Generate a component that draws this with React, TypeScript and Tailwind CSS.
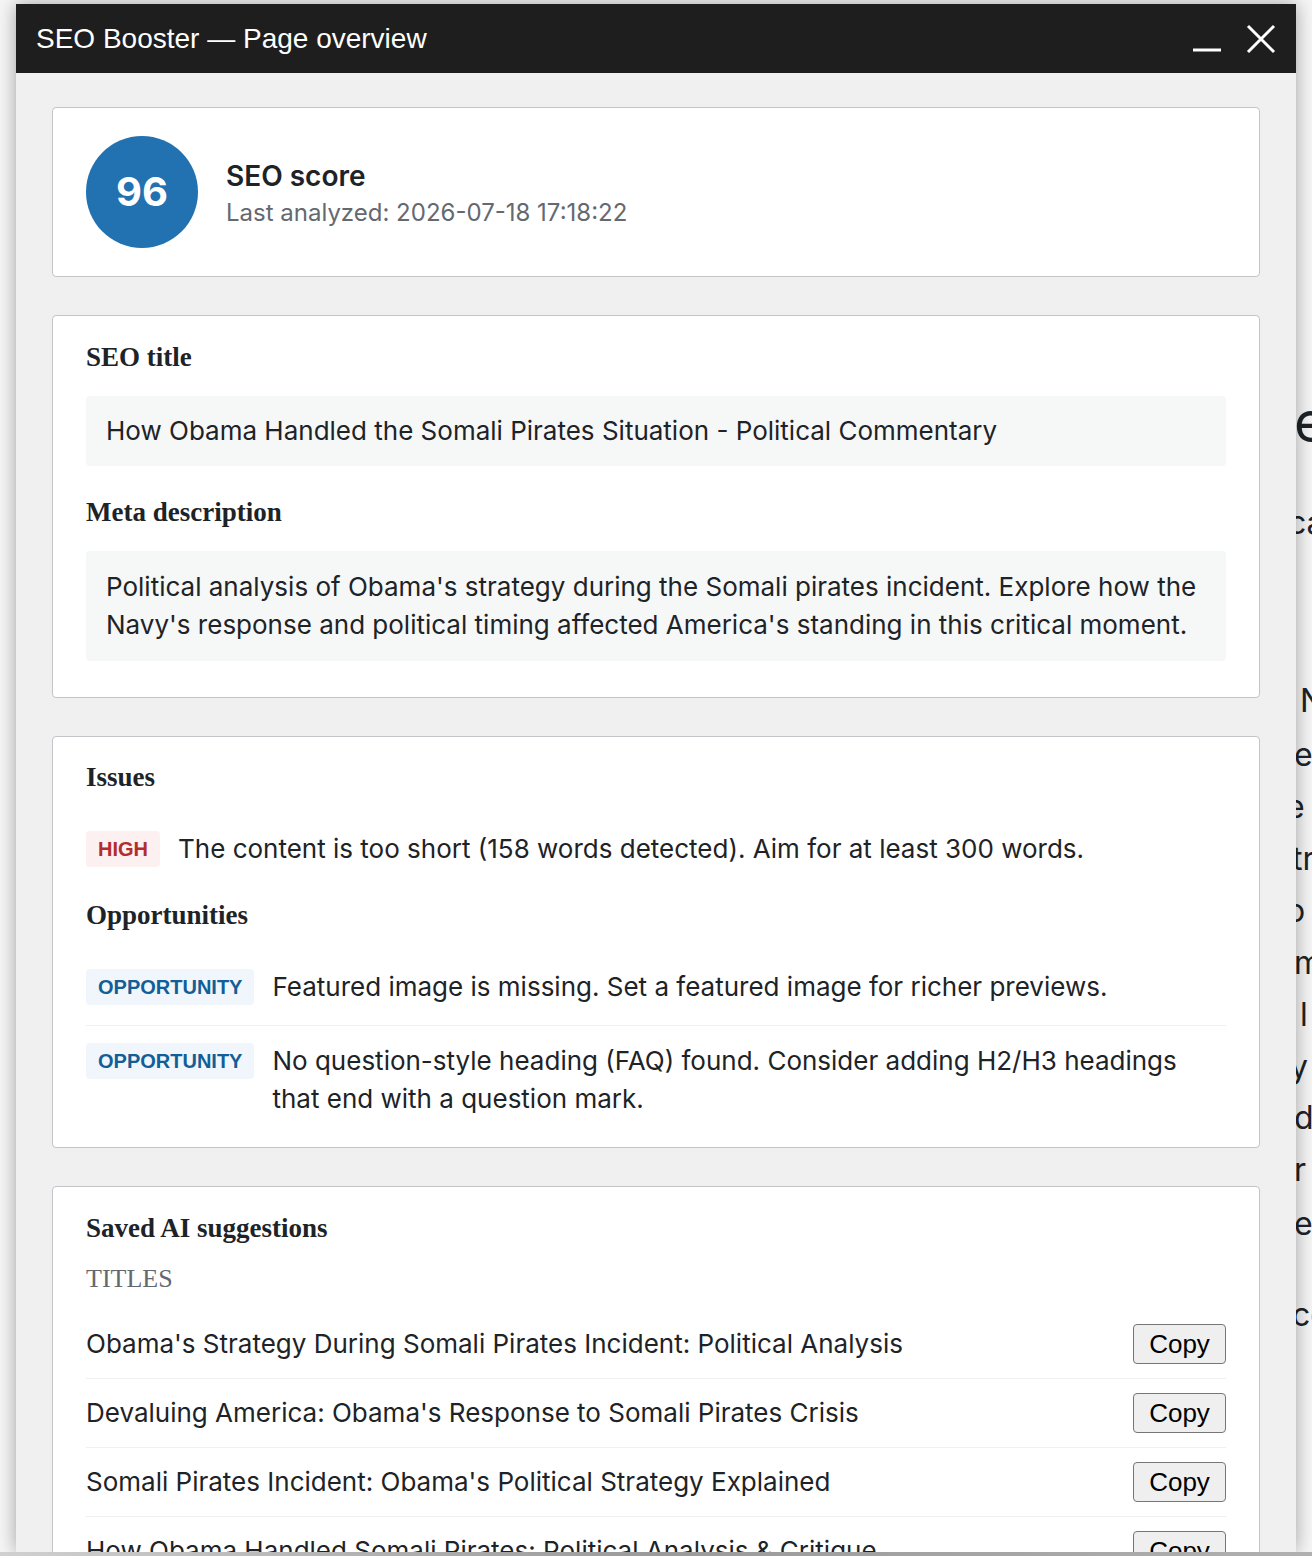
import React from "react";

const serif = "font-['Liberation_Serif','Times_New_Roman',serif]";
const sans = "font-['Inter','Noto_Sans',sans-serif]";

const behind = [
  { top: 394, left: 1294, text: "e", cls: "text-[56px]" },
  { top: 507, left: 1288, text: "ca", cls: "text-[32px]" },
  { top: 685, left: 1300, text: "N", cls: "text-[32px]" },
  { top: 739, left: 1294, text: "e", cls: "text-[32px]" },
  { top: 791, left: 1286, text: "e c", cls: "text-[32px]" },
  { top: 843, left: 1292, text: "tr", cls: "text-[32px]" },
  { top: 895, left: 1286, text: "o", cls: "text-[32px]" },
  { top: 947, left: 1294, text: "m", cls: "text-[32px]" },
  { top: 999, left: 1300, text: "l", cls: "text-[32px]" },
  { top: 1051, left: 1290, text: "y", cls: "text-[32px]" },
  { top: 1102, left: 1294, text: "d", cls: "text-[32px]" },
  { top: 1154, left: 1294, text: "r", cls: "text-[32px]" },
  { top: 1208, left: 1294, text: "e", cls: "text-[32px]" },
  { top: 1299, left: 1292, text: "co", cls: "text-[32px]" },
];

const titles = [
  "Obama's Strategy During Somali Pirates Incident: Political Analysis",
  "Devaluing America: Obama's Response to Somali Pirates Crisis",
  "Somali Pirates Incident: Obama's Political Strategy Explained",
  "How Obama Handled Somali Pirates: Political Analysis & Critique",
];

function Heading({ children, className = "" }: { children: React.ReactNode; className?: string }) {
  return (
    <h3 className={`${serif} text-[27px] leading-[34px] font-bold text-[#1d2327] ${className}`}>
      {children}
    </h3>
  );
}

function Badge({ kind }: { kind: "high" | "opp" }) {
  return kind === "high" ? (
    <span className="shrink-0 h-[36px] px-[12px] rounded-[4px] bg-[#fcf0f1] text-[#b32d2e] font-['Liberation_Sans',Arial,sans-serif] font-bold text-[20px] leading-[36px]">
      HIGH
    </span>
  ) : (
    <span className="shrink-0 h-[36px] px-[12px] rounded-[4px] bg-[#f0f6fc] text-[#135e96] font-['Liberation_Sans',Arial,sans-serif] font-bold text-[20px] leading-[36px]">
      OPPORTUNITY
    </span>
  );
}

export default function App() {
  return (
    <div className="relative w-[1312px] h-[1556px] overflow-hidden bg-[#f6f6f6]">
      {/* page behind the modal */}
      {behind.map((b) => (
        <span
          key={b.top}
          className={`absolute ${sans} text-[#1d2327] leading-none whitespace-nowrap ${b.cls}`}
          style={{ top: b.top, left: b.left }}
        >
          {b.text}
        </span>
      ))}

      <div className="absolute left-[16px] top-[4px] w-[1280px] h-[1548px] flex flex-col shadow-[0_0_18px_rgba(0,0,0,0.35)]">
        <div className="h-[69px] shrink-0 bg-[#1e1e1e] flex items-center justify-between pl-[20px] pr-[20px]">
          <span className="font-['Liberation_Sans',Arial,sans-serif] text-white text-[28px]">
            SEO Booster — Page overview
          </span>
          <div className="flex items-center gap-[24px]">
            <svg width="30" height="30" viewBox="0 0 30 30" className="mt-[2px]">
              <path d="M1 25h28" stroke="#fff" strokeWidth="3" />
            </svg>
            <svg width="30" height="30" viewBox="0 0 30 30">
              <path d="M2 2l26 26M28 2L2 28" stroke="#fff" strokeWidth="3" />
            </svg>
          </div>
        </div>

        <div className={`flex-1 overflow-hidden bg-[#f0f0f0] px-[36px] pt-[34px] flex flex-col gap-[38px] ${sans} text-[#1d2327]`}>
          {/* score */}
          <div className="shrink-0 bg-white border border-[#c3c4c7] rounded-[4px] px-[33px] py-[28px] flex items-center gap-[28px]">
            <div className="w-[112px] h-[112px] rounded-full bg-[#2271b1] flex items-center justify-center text-white text-[40px] font-bold">
              96
            </div>
            <div className="flex flex-col gap-[2px] pt-[4px]">
              <span className="text-[28px] font-semibold leading-[36px] text-[#1d2327]">SEO score</span>
              <span className="text-[24px] leading-[34px] text-[#646970]">Last analyzed: 2026-07-18 17:18:22</span>
            </div>
          </div>

          {/* title / meta */}
          <div className="shrink-0 bg-white border border-[#c3c4c7] rounded-[4px] px-[33px] pt-[24px] pb-[36px]">
            <Heading>SEO title</Heading>
            <div className="mt-[22px] bg-[#f6f7f7] rounded-[4px] px-[20px] py-[16px] text-[26px] leading-[38px]">
              How Obama Handled the Somali Pirates Situation - Political Commentary
            </div>
            <Heading className="mt-[29px]">Meta description</Heading>
            <div className="mt-[22px] bg-[#f6f7f7] rounded-[4px] px-[20px] py-[17px] text-[26px] leading-[38px]">
              Political analysis of Obama's strategy during the Somali pirates incident. Explore how the Navy's
              response and political timing affected America's standing in this critical moment.
            </div>
          </div>

          {/* issues */}
          <div className="shrink-0 bg-white border border-[#c3c4c7] rounded-[4px] px-[33px] pt-[23px] pb-[29px]">
            <Heading>Issues</Heading>
            <div className="mt-[37px] flex items-start gap-[18px]">
              <Badge kind="high" />
              <span className="text-[26px] leading-[38px] -mt-[1px]">
                The content is too short (158 words detected). Aim for at least 300 words.
              </span>
            </div>
            <Heading className="mt-[30px]">Opportunities</Heading>
            <div className="mt-[37px] flex items-start gap-[18px] pb-[19px] border-b border-[#f0f0f1]">
              <Badge kind="opp" />
              <span className="text-[26px] leading-[38px] -mt-[1px]">
                Featured image is missing. Set a featured image for richer previews.
              </span>
            </div>
            <div className="pt-[17px] flex items-start gap-[18px]">
              <Badge kind="opp" />
              <span className="text-[26px] leading-[38px] -mt-[1px]">
                No question-style heading (FAQ) found. Consider adding H2/H3 headings that end with a question
                mark.
              </span>
            </div>
          </div>

          {/* AI suggestions */}
          <div className="shrink-0 bg-white border border-[#c3c4c7] rounded-[4px] px-[33px] pt-[24px] pb-[30px]">
            <Heading>Saved AI suggestions</Heading>
            <div className={`${serif} mt-[17px] text-[26px] leading-[34px] text-[#646970] uppercase`}>Titles</div>
            <div className="mt-[14px]">
              {titles.map((t) => (
                <div key={t} className="flex items-center justify-between py-[14px] border-b border-[#f0f0f1]">
                  <span className="text-[26px] leading-[38px]">{t}</span>
                  <button className="h-[40px] w-[93px] rounded-[4px] border border-[#767676] bg-[#efefef] font-['Liberation_Sans',Arial,sans-serif] text-[26px] text-black leading-none">
                    Copy
                  </button>
                </div>
              ))}
            </div>
          </div>
        </div>
      </div>
      <div className="absolute left-0 bottom-0 w-full h-[4px] bg-gradient-to-r from-[#d0d0d0] via-[#9a9a9a] to-[#b0b0b0]" />
    </div>
  );
}
